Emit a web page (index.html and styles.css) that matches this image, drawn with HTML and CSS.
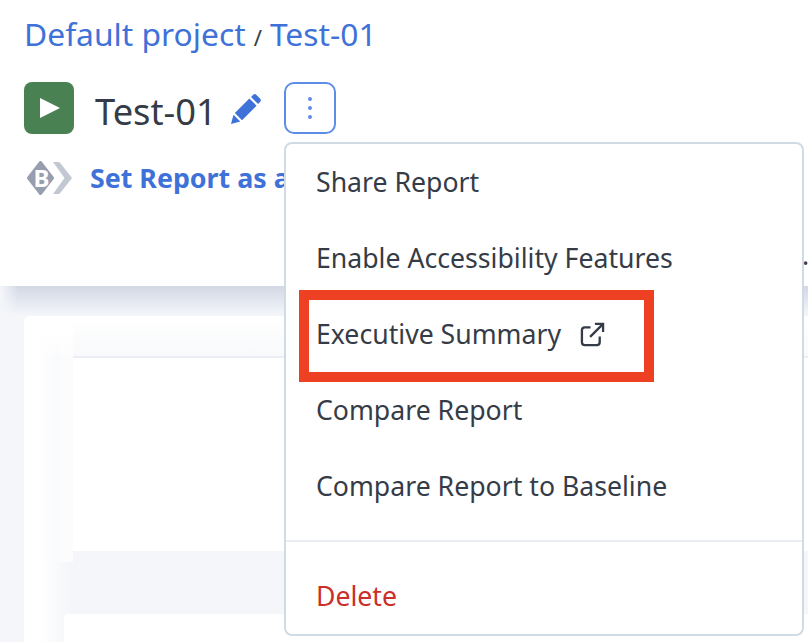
FILE: index.html
```html
<!DOCTYPE html>
<html lang="en">
<head>
<meta charset="utf-8">
<title>Test-01</title>
<link rel="stylesheet" href="styles.css">
</head>
<body>
<div class="page">
  <header class="header">
    <nav class="crumbs"><a class="crumb">Default project</a><span class="sep">/</span><a class="crumb">Test-01</a></nav>
    <div class="title-row">
      <span class="status"><svg viewBox="0 0 20 20" width="20" height="20"><path d="M0 0L20 10L0 20Z" fill="#fff"/></svg></span>
      <h1 class="title">Test-01</h1>
      <svg class="pencil" viewBox="0 0 32 32" width="31" height="31"><path d="M1 31L3.6 21.4L10.6 28.4Z M5 19.6L20 4.6L27.4 12L12.4 27Z M21.7 3L24 .8C25 -.1 26.2 -.1 27.1 .8L31.2 4.9C32.1 5.8 32.1 7 31.2 8L29 10.3Z" fill="#3f72d9"/></svg>
      <button class="more" type="button" aria-label="More"><i></i><i></i><i></i></button>
    </div>
    <div class="baseline-row">
      <svg class="baseline" viewBox="0 0 46 34" width="46" height="34"><path d="M26 1H31C32 1 32.800 1.500 33.400 2.300L45 17L33.400 31.700C32.800 32.500 32 33 31 33H26L37.500 17Z" fill="#c2c8d2"/><path d="M13.500 1.500L25.500 17L13.500 32.500L1.500 17Z" fill="#969eb0" stroke="#969eb0" stroke-width="3" stroke-linejoin="round"/><text x="14.500" y="25.500" class="baseline-b">B</text></svg>
      <a class="baseline-link">Set Report as a Baseline</a>
    </div>
  </header>
  <main class="main">
    <section class="card">
      <div class="card-rail">
        <div class="rail-strip"></div>
        <div class="rail-foot"></div>
      </div>
      <div class="card-body">
        <div class="panel-cap"></div>
        <div class="panel"></div>
        <div class="panel-gap"></div>
        <div class="panel-next"></div>
      </div>
    </section>
  </main>
  <span class="edge-text">.l</span>
  <div class="menu">
    <ul class="menu-list">
      <li class="item">Share Report</li>
      <li class="item">Enable Accessibility Features</li>
      <li class="item">Executive Summary<svg class="ext" viewBox="0 0 26 26" width="25" height="25"><path d="M11 5.500H5C3.300 5.500 2 6.800 2 8.500V21C2 22.700 3.300 24 5 24H17.500C19.200 24 20.500 22.700 20.500 21V15M10.500 15.500L23.500 2.500M15.500 2H24V10.500" fill="none" stroke="#353c47" stroke-width="2.400"/></svg></li>
      <li class="item">Compare Report</li>
      <li class="item">Compare Report to Baseline</li>
    </ul>
    <div class="menu-foot"><div class="item danger">Delete</div></div>
  </div>
  <div class="highlight"></div>
</div>
</body>
</html>
```

FILE: styles.css
```css
* { box-sizing: border-box; }
html, body { margin: 0; height: 100%; }
body { overflow: hidden; background: #f4f6fa; font-family: "Noto Sans", sans-serif; color: #353c47; }
.page { position: relative; width: 808px; height: 642px; overflow: hidden; }

.header { height: 286px; background: #fff; padding: 11px 24px 0; }
.crumbs { display: flex; align-items: baseline; height: 46px; font-size: 31.800px; line-height: 46px; }
.crumb { color: #3f72d9; }
.sep { font-size: 22px; margin: 0 8px; color: #353c47; }
.title-row { display: flex; align-items: center; height: 52px; margin-top: 25px; }
.status { display: flex; align-items: center; justify-content: center; width: 50px; height: 52px; background: #4a8153; border-radius: 8px; padding-left: 2px; }
.title { margin: 6px 0 0 21px; font-size: 36.300px; font-weight: 400; line-height: 52px; color: #353c47; }
.pencil { margin-left: 13px; margin-top: 2px; }
.more { display: flex; flex-direction: column; align-items: center; justify-content: center; gap: 5px; width: 52px; height: 52px; margin-left: 23px; padding: 0; background: #fff; border: 2px solid #5e8de8; border-radius: 10px; }
.more i { width: 4px; height: 4px; border-radius: 50%; background: #5e8de8; }
.baseline-row { display: flex; align-items: center; height: 44px; margin-top: 22px; padding-left: 3px; }
.baseline { flex: none; }
.baseline-b { font: 700 24px "Noto Sans", sans-serif; fill: #fff; text-anchor: middle; }
.baseline-link { margin: -2px 0 0 17px; font-size: 26.800px; font-weight: 700; color: #3f72d9; white-space: nowrap; }

.main { padding: 30px 0 0 24px; height: 356px; background: linear-gradient(90deg, #f4f6fa, rgba(244, 246, 250, 0) 18px), linear-gradient(#d3d8e5, #f4f6fa 30px); }
.card { display: flex; height: 326px; background: #fff; border-radius: 6px 0 0 0; }
.card-rail { display: flex; flex-direction: column; flex: 0 0 49px; padding-top: 16px; }
.rail-strip { height: 230px; background: linear-gradient(#fff, rgba(255, 255, 255, 0) 30px), linear-gradient(90deg, #fff 12px, #f9fafc 36px, #fcfcfd 37px, #fcfcfd); }
.rail-foot { flex: 1; background: linear-gradient(90deg, #fff 16px, #f4f6fa 46px); }
.card-body { flex: 1; }
.panel-cap { height: 42px; background: linear-gradient(#fff, #f8f9fb 40px, #eceef5 40px); }
.panel { height: 193px; background: #fff; }
.panel-gap { height: 63px; background: #f4f6fa; }
.panel-next { height: 28px; margin-left: -9px; background: #fff; border-radius: 4px 0 0 0; }

.edge-text { position: absolute; left: 802px; top: 237px; font-size: 26.600px; letter-spacing: -2px; }

.menu { position: absolute; left: 284px; top: 142px; width: 520px; height: 494px; background: #fff; border: 2px solid #cfdbe5; border-radius: 8px; }
.menu-list { list-style: none; margin: 0; padding: 0 0 16px; border-bottom: 2px solid #eaedf2; height: 398px; }
.item { display: flex; align-items: center; height: 76px; padding-left: 30px; font-size: 26.650px; line-height: 76px; white-space: nowrap; color: #353c47; }
.ext { margin-left: 19px; }
.menu-foot { padding-top: 16px; }
.danger { color: #cb2f2a; }

.highlight { position: absolute; left: 299px; top: 290px; width: 355px; height: 92px; border: 10px solid #ee4023; }
```
